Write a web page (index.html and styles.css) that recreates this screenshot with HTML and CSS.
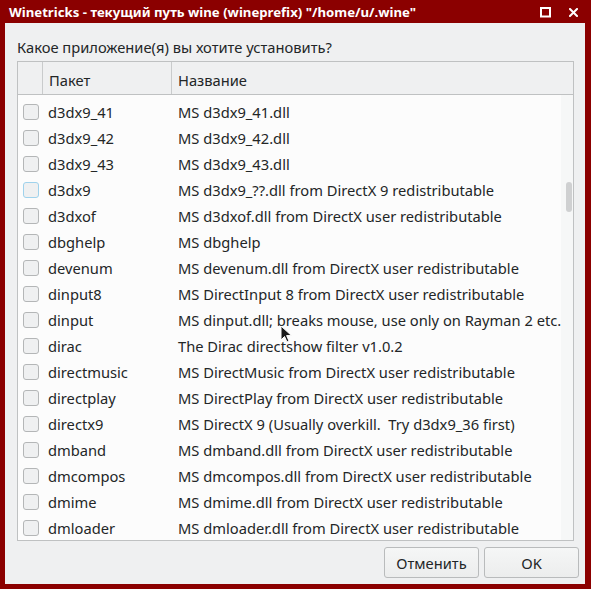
FILE: index.html
```html
<!DOCTYPE html>
<html lang="ru">
<head>
<meta charset="utf-8">
<title>Winetricks</title>
<link rel="stylesheet" href="styles.css">
</head>
<body>
<div class="window">
  <div class="titlebar">
    <span class="title">Winetricks - текущий путь wine (wineprefix) "/home/u/.wine"</span>
    <span class="tb-btns">
      <svg class="tb-icon" width="11" height="11" viewBox="0 0 11 11"><rect x="1" y="1" width="9" height="8.5" fill="none" stroke="#fff" stroke-width="2"/></svg>
      <svg class="tb-icon" width="9" height="9" viewBox="0 0 9 9"><path d="M1 1 L8 8 M8 1 L1 8" stroke="#fff" stroke-width="2" stroke-linecap="square"/></svg>
    </span>
  </div>
  <div class="client">
    <div class="prompt">Какое приложение(я) вы хотите установить?</div>
    <div class="table">
      <div class="thead">
        <div class="th th-check"></div>
        <div class="th th-pkg">Пакет</div>
        <div class="th th-name">Название</div>
      </div>
      <div class="tbody">
        <div class="rows">
          <div class="row"><span class="cb"></span><span class="pkg">d3dx9_41</span><span class="name">MS d3dx9_41.dll</span></div>
          <div class="row"><span class="cb"></span><span class="pkg">d3dx9_42</span><span class="name">MS d3dx9_42.dll</span></div>
          <div class="row"><span class="cb"></span><span class="pkg">d3dx9_43</span><span class="name">MS d3dx9_43.dll</span></div>
          <div class="row"><span class="cb cb-hover"></span><span class="pkg">d3dx9</span><span class="name">MS d3dx9_??.dll from DirectX 9 redistributable</span></div>
          <div class="row"><span class="cb"></span><span class="pkg">d3dxof</span><span class="name">MS d3dxof.dll from DirectX user redistributable</span></div>
          <div class="row"><span class="cb"></span><span class="pkg">dbghelp</span><span class="name">MS dbghelp</span></div>
          <div class="row"><span class="cb"></span><span class="pkg">devenum</span><span class="name">MS devenum.dll from DirectX user redistributable</span></div>
          <div class="row"><span class="cb"></span><span class="pkg">dinput8</span><span class="name">MS DirectInput 8 from DirectX user redistributable</span></div>
          <div class="row"><span class="cb"></span><span class="pkg">dinput</span><span class="name">MS dinput.dll; breaks mouse, use only on Rayman 2 etc.</span></div>
          <div class="row"><span class="cb"></span><span class="pkg">dirac</span><span class="name">The Dirac directshow filter v1.0.2</span></div>
          <div class="row"><span class="cb"></span><span class="pkg">directmusic</span><span class="name">MS DirectMusic from DirectX user redistributable</span></div>
          <div class="row"><span class="cb"></span><span class="pkg">directplay</span><span class="name">MS DirectPlay from DirectX user redistributable</span></div>
          <div class="row"><span class="cb"></span><span class="pkg">directx9</span><span class="name">MS DirectX 9 (Usually overkill.  Try d3dx9_36 first)</span></div>
          <div class="row"><span class="cb"></span><span class="pkg">dmband</span><span class="name">MS dmband.dll from DirectX user redistributable</span></div>
          <div class="row"><span class="cb"></span><span class="pkg">dmcompos</span><span class="name">MS dmcompos.dll from DirectX user redistributable</span></div>
          <div class="row"><span class="cb"></span><span class="pkg">dmime</span><span class="name">MS dmime.dll from DirectX user redistributable</span></div>
          <div class="row"><span class="cb"></span><span class="pkg">dmloader</span><span class="name">MS dmloader.dll from DirectX user redistributable</span></div>
        </div>
        <div class="scrollbar"><div class="thumb"></div></div>
      </div>
    </div>
    <div class="buttons">
      <button class="btn btn-cancel">Отменить</button>
      <button class="btn btn-ok">OK</button>
    </div>
  </div>
  <svg class="cursor" width="14" height="20" viewBox="0 0 14 20"><path d="M1 1 L1 15 L4.5 11.5 L7 17 L9 16 L6.6 10.6 L11.5 10.6 Z" fill="#1a1a1a" stroke="#fff" stroke-width="1"/></svg>
</div>
</body>
</html>
```

FILE: styles.css
```css
* { box-sizing: border-box; }
html, body { margin: 0; padding: 0; }
body {
  width: 591px;
  height: 589px;
  overflow: hidden;
  font-family: "Noto Sans", "Open Sans", sans-serif;
  font-size: 14.7px;
  color: #232627;
}
.window {
  position: relative;
  width: 591px;
  height: 589px;
  background: #8b0000;
  display: flex;
  flex-direction: column;
}
.titlebar {
  height: 24px;
  display: flex;
  align-items: center;
  justify-content: space-between;
  padding: 1px 13px 0 9px;
  color: #fff;
}
.title {
  font-weight: bold;
  font-size: 13.2px;
  white-space: nowrap;
}
.tb-btns {
  display: flex;
  gap: 18px;
  align-items: center;
}
.tb-icon { display: block; }
.client {
  margin: 0 6px 5px 5px;
  flex: 1;
  background: #eff0f1;
  padding: 13px 6px 6px 12px;
  display: flex;
  flex-direction: column;
}
.prompt {
  height: 22px;
  line-height: 22px;
  margin-bottom: 3px;
  white-space: nowrap;
}
.table {
  width: 557px;
  border: 1px solid #bfc1c2;
  display: flex;
  flex-direction: column;
}
.thead {
  height: 33px;
  display: flex;
  border-bottom: 1px solid #bfc1c2;
  background: #eff0f1;
}
.th {
  line-height: 32px;
  padding-top: 2px;
  white-space: nowrap;
}
.th-check {
  width: 25px;
  border-right: 1px solid #c9cbcc;
}
.th-pkg {
  width: 129px;
  padding-left: 6px;
  border-right: 1px solid #c9cbcc;
}
.th-name {
  flex: 1;
  padding-left: 6px;
}
.tbody {
  height: 445px;
  display: flex;
  background: #fcfcfc;
  overflow: hidden;
}
.rows {
  flex: 1;
  padding-top: 4px;
}
.row {
  height: 26px;
  display: flex;
  align-items: center;
  white-space: pre;
}
.cb {
  width: 16px;
  height: 16px;
  margin-left: 5px;
  margin-right: 9px;
  border: 1px solid #b4b6b7;
  border-radius: 3px;
  background: #eff0f1;
  flex: none;
}
.cb-hover {
  border-color: #9fd2ec;
}
.pkg {
  width: 130px;
  flex: none;
}
.name {
  flex: 1;
}
.scrollbar {
  width: 16px;
  flex: none;
  background: #f6f7f7;
  padding-top: 87px;
  display: flex;
  justify-content: center;
}
.thumb {
  width: 6px;
  height: 30px;
  border-radius: 3px;
  background: #cfd0d1;
}
.buttons {
  margin-top: 6px;
  display: flex;
  justify-content: flex-end;
  gap: 5px;
}
.btn {
  height: 31px;
  width: 95px;
  font-family: "Noto Sans", "Open Sans", sans-serif;
  font-size: 14.7px;
  color: #232627;
  background: linear-gradient(#f5f6f6, #eceded);
  border: 1px solid #b9bbbc;
  border-radius: 3px;
  padding: 0;
}
.cursor {
  position: absolute;
  left: 280px;
  top: 325px;
}
```
